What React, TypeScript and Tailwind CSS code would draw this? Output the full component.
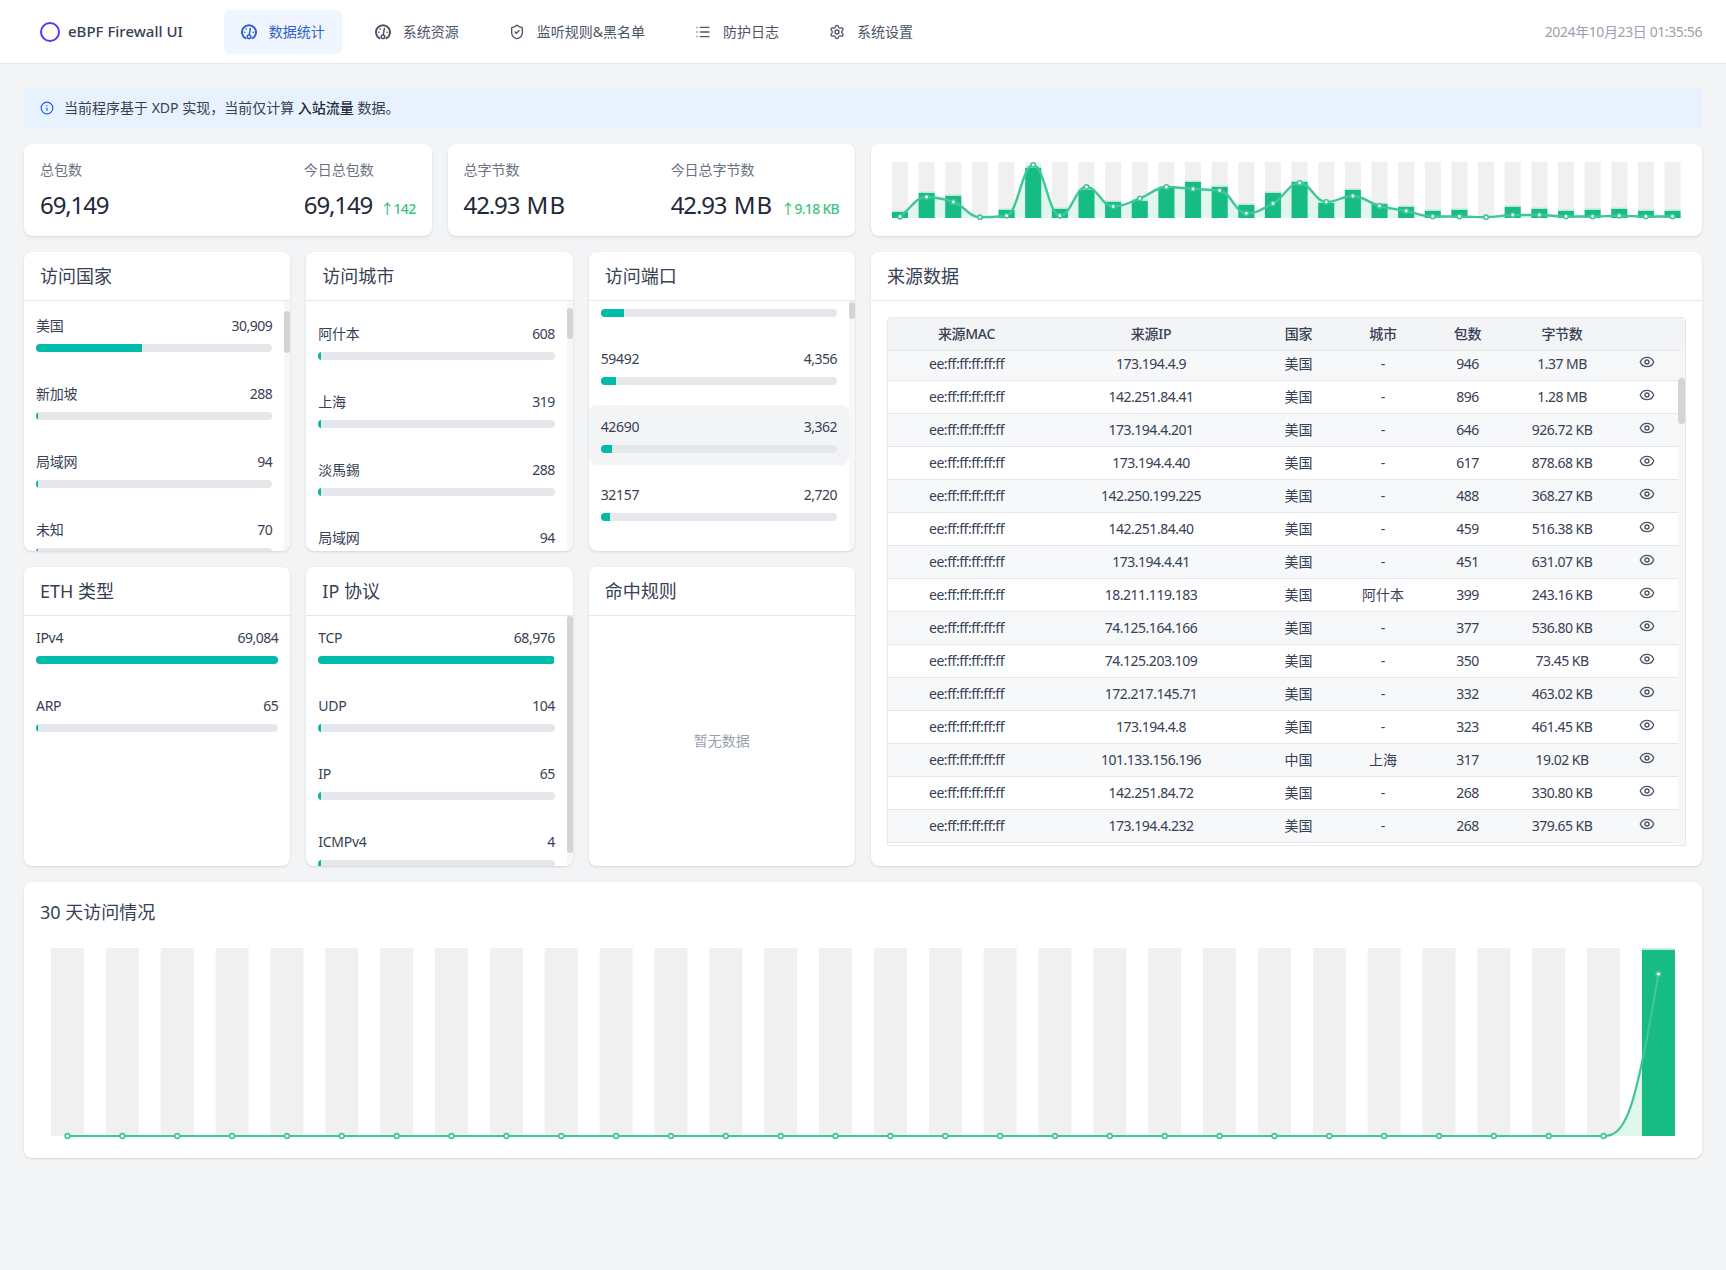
import type { ReactNode } from 'react';
import { Eye, Info, List, Settings, ShieldCheck } from 'lucide-react';

// ── data ──

const TOTAL = 69149;

interface ListRow {
  label: string;
  value: number;
  pct?: number;
  hover?: boolean;
}

const countries: ListRow[] = [
  { label: '美国', value: 30909 },
  { label: '新加坡', value: 288 },
  { label: '局域网', value: 94 },
  { label: '未知', value: 70 },
];

const cities: ListRow[] = [
  { label: '阿什本', value: 608 },
  { label: '上海', value: 319 },
  { label: '淡馬錫', value: 288 },
  { label: '局域网', value: 94 },
];

// first row is scrolled out of view, only its bar still shows
const ports: ListRow[] = [
  { label: '', value: 6900 },
  { label: '59492', value: 4356 },
  { label: '42690', value: 3362, hover: true },
  { label: '32157', value: 2720 },
];

const ethTypes: ListRow[] = [
  { label: 'IPv4', value: 69084 },
  { label: 'ARP', value: 65 },
];

const protocols: ListRow[] = [
  { label: 'TCP', value: 68976 },
  { label: 'UDP', value: 104 },
  { label: 'IP', value: 65 },
  { label: 'ICMPv4', value: 4 },
];

const sources = [
  ['173.194.4.9', '美国', '-', '946', '1.37 MB'],
  ['142.251.84.41', '美国', '-', '896', '1.28 MB'],
  ['173.194.4.201', '美国', '-', '646', '926.72 KB'],
  ['173.194.4.40', '美国', '-', '617', '878.68 KB'],
  ['142.250.199.225', '美国', '-', '488', '368.27 KB'],
  ['142.251.84.40', '美国', '-', '459', '516.38 KB'],
  ['173.194.4.41', '美国', '-', '451', '631.07 KB'],
  ['18.211.119.183', '美国', '阿什本', '399', '243.16 KB'],
  ['74.125.164.166', '美国', '-', '377', '536.80 KB'],
  ['74.125.203.109', '美国', '-', '350', '73.45 KB'],
  ['172.217.145.71', '美国', '-', '332', '463.02 KB'],
  ['173.194.4.8', '美国', '-', '323', '461.45 KB'],
  ['101.133.156.196', '中国', '上海', '317', '19.02 KB'],
  ['142.251.84.72', '美国', '-', '268', '330.80 KB'],
  ['173.194.4.232', '美国', '-', '268', '379.65 KB'],
];

// bar heights and line positions of the small chart, px above the baseline
const miniBars = [6, 25, 22, 0, 8, 50, 9, 28, 16, 17, 30, 36, 31, 13, 25, 36, 15, 28, 14, 11, 7, 8, 0, 11, 9, 7, 8, 9, 7, 7];
const miniLine = [1.3, 21, 16, 0.7, 2.3, 53, 2.3, 31, 11.5, 19.5, 31, 29, 27.5, 4.7, 14.5, 35, 16, 22, 12, 7, 1.5, 1.5, 0.7, 3, 3, 1.5, 1.5, 2.3, 1.5, 1.5];

const monthBars = [...Array(29).fill(0), 186] as number[];
const monthLine = [...Array(29).fill(0), 162] as number[];

// ── helpers ──

// Monotone cubic through the points, flat wherever the direction turns
function smoothPath(pts: [number, number][]): string {
  const slopes = pts.slice(1).map((p, i) => (p[1] - pts[i][1]) / (p[0] - pts[i][0]));
  const tangents = pts.map((_, i) => {
    if (i === 0) return slopes[0];
    if (i === pts.length - 1) return slopes[i - 1] * 2;
    const a = slopes[i - 1];
    const b = slopes[i];
    if (a * b <= 0) return 0;
    return (2 * a * b) / (a + b);
  });
  let d = `M${pts[0][0]},${pts[0][1]}`;
  for (let i = 0; i < pts.length - 1; i++) {
    const h = (pts[i + 1][0] - pts[i][0]) / 2.4;
    d += `C${pts[i][0] + h},${pts[i][1] + tangents[i] * h} ${pts[i + 1][0] - h},${pts[i + 1][1] - tangents[i + 1] * h} ${pts[i + 1][0]},${pts[i + 1][1]}`;
  }
  return d;
}

function BarLineChart({ width, height, left, step, barWidth, base, track, bars, line, strokeWidth, radius }: {
  width: number; height: number; left: number; step: number; barWidth: number; base: number; track: number;
  bars: number[]; line: number[]; strokeWidth: number; radius: number;
}) {
  const pts = line.map((v, i): [number, number] => [left + i * step + barWidth / 2, base - v]);
  const curve = smoothPath(pts);
  const area = `${curve}L${pts[pts.length - 1][0]},${base}L${pts[0][0]},${base}Z`;
  return (
    <svg width={width} height={height} className="block">
      {bars.map((_, i) => (
        <rect key={i} x={left + i * step} y={base - track} width={barWidth} height={track} fill="#f0f0f0" />
      ))}
      <path d={area} fill="#e1f7ec" />
      {bars.map((h, i) => h > 0 && (
        <g key={i}>
          <rect x={left + i * step} y={base - h - 1.5} width={barWidth} height={h + 1.5} fill="#b5ebd4" />
          <rect x={left + i * step} y={base - h} width={barWidth} height={h} fill="#17bc84" />
        </g>
      ))}
      <path d={curve} fill="none" stroke="#3fc795" strokeWidth={strokeWidth} />
      {pts.map(([x, y], i) => (
        <circle key={i} cx={x} cy={y} r={radius} fill="#ffffff" stroke="#3fc795" strokeWidth={1.6} />
      ))}
    </svg>
  );
}

// ── pieces ──

function GaugeIcon() {
  return (
    <svg width="16" height="16" viewBox="0 0 16 16" fill="none" stroke="currentColor" strokeWidth="2" strokeLinecap="round">
      <path d="M4.4 14.2A7 7 0 1 1 11.6 14.2" />
      <path d="M9.4 4.4 8.3 10.4" strokeWidth="1.5" />
      <circle cx="8" cy="12.7" r="1.8" strokeWidth="1.5" />
      <path d="M3.7 8.2h.1M5.2 5h.1M12.2 8.2h.1" strokeWidth="1.6" />
    </svg>
  );
}

function NavItem({ icon, label, active }: { icon: ReactNode; label: string; active?: boolean }) {
  return (
    <div className={`flex h-11 items-center gap-3 rounded-md px-[17px] text-sm ${active ? 'bg-[#eff6ff] text-[#2f62c9]' : 'text-gray-600'}`}>
      {icon}
      <span>{label}</span>
    </div>
  );
}

function Stat({ label, value, unit, delta }: { label: string; value: string; unit?: string; delta?: string }) {
  return (
    <div>
      <div className="text-sm leading-5 text-gray-500">{label}</div>
      <div className="mt-[9px] flex items-baseline gap-2 leading-9">
        <span className="text-2xl tracking-[-1.1px] text-gray-800">
          {value}
          {unit && <span className="tracking-[1px]"> {unit}</span>}
        </span>
        {delta && <span className="text-sm font-medium tracking-[-0.7px] text-[#3cc383]">↑{delta}</span>}
      </div>
    </div>
  );
}

function CardTitle({ children }: { children: ReactNode }) {
  return <div className="h-[49px] border-b border-gray-200 px-4 text-lg leading-[48px] text-gray-700">{children}</div>;
}

function RankList({ title, rows, offset, thumb }: { title: string; rows: ListRow[]; offset: string; thumb?: string }) {
  return (
    <div className="flex h-[299px] flex-col overflow-hidden rounded-lg bg-white shadow-sm">
      <CardTitle>{title}</CardTitle>
      <div className="relative min-h-0 flex-1 overflow-hidden">
        <div className={`flex flex-col gap-2 ${offset} ${thumb ? 'mr-1.5' : ''}`}>
          {rows.map(r => (
            <div key={r.label || r.value} className={`h-[60px] shrink-0 rounded-lg px-3 pt-3 ${r.hover ? 'bg-gray-100' : ''}`}>
              {r.label ? (
                <div className="flex justify-between text-sm leading-5 text-gray-700">
                  <span className="tracking-[-0.3px]">{r.label}</span>
                  <span className="tracking-[-0.5px]">{r.value.toLocaleString('en-US')}</span>
                </div>
              ) : (
                <div className="h-5" />
              )}
              <div className="mt-2 h-2 overflow-hidden rounded bg-gray-200">
                <div className="h-full bg-teal-500" style={{ width: `${Math.max((r.value / TOTAL) * 100, 1)}%` }} />
              </div>
            </div>
          ))}
        </div>
        {thumb && (
          <div className="absolute top-0 right-0 bottom-0 w-1.5 bg-[#f7f7f7]">
            <div className={`absolute right-0 w-1.5 rounded-full bg-[#d4d4d4] ${thumb}`} />
          </div>
        )}
      </div>
    </div>
  );
}

const COLS = ['w-[157px]', 'w-[212px]', 'w-[83px]', 'w-[86px]', 'w-[83px]', 'w-[106px]', 'w-[63px]'];

function ColGroup() {
  return (
    <colgroup>
      {COLS.map((c, i) => <col key={i} className={c} />)}
    </colgroup>
  );
}

function SourceTable() {
  return (
    <div className="relative mt-4 h-[529px] overflow-hidden rounded-t border border-gray-200 pr-[7px]">
      <table className="relative z-10 w-full table-fixed bg-gray-100 text-center text-sm">
        <ColGroup />
        <thead>
          <tr className="h-8 border-b border-gray-200 text-gray-700">
            {['来源MAC', '来源IP', '国家', '城市', '包数', '字节数', ''].map((h, i) => (
              <th key={i} className="font-medium tracking-[-0.3px]">{h}</th>
            ))}
          </tr>
        </thead>
      </table>
      <table className="-mt-[3px] w-full table-fixed text-center text-sm text-gray-700">
        <ColGroup />
        <tbody>
          {sources.map((s, i) => (
            <tr key={s[0]} className={`h-[33px] border-b border-gray-200 ${i % 2 === 0 ? 'bg-[#f6f8fa]' : 'bg-white'}`}>
              <td className="tracking-[-0.45px]">ee:ff:ff:ff:ff:ff</td>
              <td className="tracking-[-0.5px]">{s[0]}</td>
              <td>{s[1]}</td>
              <td>{s[2]}</td>
              <td className="tracking-[-0.5px]">{s[3]}</td>
              <td className="tracking-[-0.5px]">{s[4]}</td>
              <td><Eye size={16} className="mx-auto -mt-1 text-gray-600" /></td>
            </tr>
          ))}
        </tbody>
      </table>
      <div className="absolute top-0 right-0 bottom-0 w-[7px] bg-[#f7f7f7]">
        <div className="h-[33px] bg-gray-100" />
        <div className="mt-[27px] h-[46px] rounded-full bg-[#d4d4d4]" />
      </div>
    </div>
  );
}

// ── page ──

export default function App() {
  return (
    <div className="min-h-[1270px] bg-gray-100 font-['Noto_Sans','Noto_Sans_CJK_SC',sans-serif]">
      <header className="flex h-16 items-center justify-between border-b border-gray-200 bg-white pr-6 pl-10">
        <div className="flex items-center">
          <div className="h-5 w-5 rounded-full border-2 border-indigo-600" />
          <span className="mr-[41px] ml-2 text-[15px] font-medium text-gray-700">eBPF Firewall UI</span>
          <nav className="flex gap-4">
            <NavItem active icon={<GaugeIcon />} label="数据统计" />
            <NavItem icon={<GaugeIcon />} label="系统资源" />
            <NavItem icon={<ShieldCheck size={16} />} label="监听规则&黑名单" />
            <NavItem icon={<List size={16} />} label="防护日志" />
            <NavItem icon={<Settings size={16} />} label="系统设置" />
          </nav>
        </div>
        <span className="text-sm tracking-[-0.4px] text-gray-400">2024年10月23日 01:35:56</span>
      </header>

      <main className="flex flex-col gap-4 p-6">
        <div className="flex h-10 items-center gap-2.5 rounded-sm bg-[#e8f2fe] pl-4 text-sm text-gray-700">
          <Info size={14} className="text-blue-600" />
          <span>当前程序基于 XDP 实现，当前仅计算 <span className="font-medium text-gray-800">入站流量</span> 数据。</span>
        </div>

        <div className="grid grid-cols-2 gap-4">
          <div className="flex flex-col gap-4">
            <div className="grid grid-cols-2 gap-4">
              <div className="flex h-[92px] justify-between rounded-lg bg-white p-4 shadow-sm">
                <Stat label="总包数" value="69,149" />
                <Stat label="今日总包数" value="69,149" delta="142" />
              </div>
              <div className="flex h-[92px] justify-between rounded-lg bg-white p-4 shadow-sm">
                <Stat label="总字节数" value="42.93" unit="MB" />
                <Stat label="今日总字节数" value="42.93" unit="MB" delta="9.18 KB" />
              </div>
            </div>
            <div className="grid grid-cols-3 gap-4">
              <RankList title="访问国家" rows={countries} offset="mt-[3px]" thumb="top-[10px] h-[42px]" />
              <RankList title="访问城市" rows={cities} offset="mt-[11px]" thumb="top-[7px] h-[31px]" />
              <RankList title="访问端口" rows={ports} offset="-mt-8" thumb="top-px h-[17px]" />
              <RankList title="ETH 类型" rows={ethTypes} offset="mt-0" />
              <RankList title="IP 协议" rows={protocols} offset="mt-0" thumb="top-0 h-[237px]" />
              <div className="flex h-[299px] flex-col rounded-lg bg-white shadow-sm">
                <CardTitle>命中规则</CardTitle>
                <div className="flex flex-1 items-center justify-center text-sm text-gray-400">暂无数据</div>
              </div>
            </div>
          </div>

          <div className="flex flex-col gap-4">
            <div className="h-[92px] rounded-lg bg-white p-4 shadow-sm">
              <BarLineChart width={799} height={60} left={5} step={26.64} barWidth={16} base={58} track={56} bars={miniBars} line={miniLine} strokeWidth={2.4} radius={2.2} />
            </div>
            <div className="h-[614px] rounded-lg bg-white shadow-sm">
              <CardTitle>来源数据</CardTitle>
              <div className="px-4">
                <SourceTable />
              </div>
            </div>
          </div>
        </div>

        <div className="h-[276px] rounded-lg bg-white p-4 shadow-sm">
          <div className="text-lg leading-7 text-gray-700">30 天访问情况</div>
          <div className="mt-2">
            <BarLineChart width={1646} height={208} left={11} step={54.86} barWidth={33} base={202} track={188} bars={monthBars} line={monthLine} strokeWidth={2.2} radius={2.4} />
          </div>
        </div>
      </main>
    </div>
  );
}
